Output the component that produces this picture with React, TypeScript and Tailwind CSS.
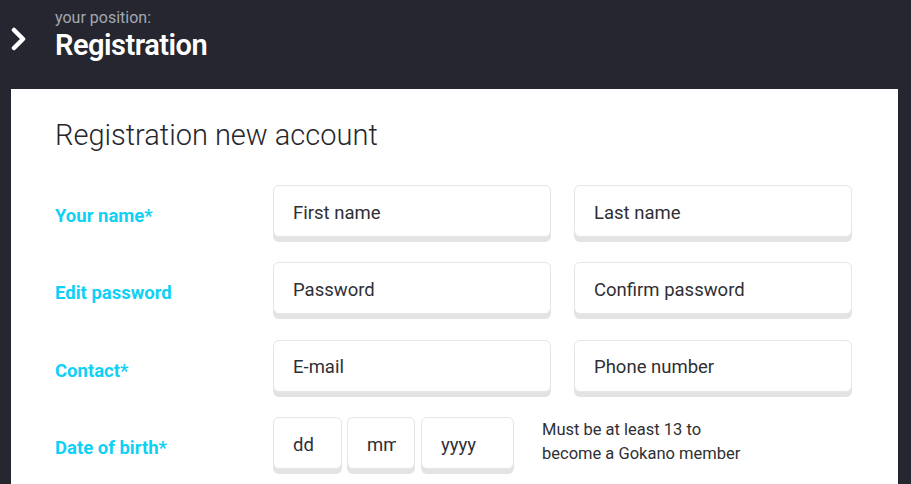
import React from "react";

const font = { fontFamily: "Roboto, 'Open Sans', sans-serif" };

function Box({ text, w, clip }: { text: string; w: string; clip?: string }) {
  return (
    <div
      className={`${w} h-[52px] shrink-0 rounded-[6px] border border-[#e6e6e6] bg-white shadow-[0_5px_0_#e3e3e3] flex items-center pl-[19px] pt-[5px]`}
    >
      <span className={`text-[18.5px] text-[#2f2f35] whitespace-nowrap overflow-hidden ${clip ?? ""}`}>{text}</span>
    </div>
  );
}

function Label({ text }: { text: string }) {
  return <div className="w-[218px] shrink-0 pt-[18px] text-[18.5px] font-bold text-[#0fd0f5]">{text}</div>;
}

function Row({ label, children }: { label: string; children: React.ReactNode }) {
  return (
    <div className="flex items-start h-[57px]">
      <Label text={label} />
      <div className="flex gap-[23px]">{children}</div>
    </div>
  );
}

export default function App() {
  return (
    <div className="w-[911px] h-[484px] bg-[#25262f] overflow-hidden" style={font}>
      <div className="h-[89px] flex">
        <div className="w-[55px] shrink-0 flex pt-[27px] pl-[10px]">
          <svg width="18" height="24" viewBox="0 0 18 24">
            <polyline points="4,3 13,12 4,21" fill="none" stroke="white" strokeWidth="4.5" strokeLinecap="round" strokeLinejoin="round" />
          </svg>
        </div>
        <div className="flex flex-col pt-[8px]">
          <div className="text-[16px] leading-[20px] text-[#a3a8b0]">your position:</div>
          <div className="text-[29px] leading-[34px] font-semibold text-white tracking-[-0.5px]">Registration</div>
        </div>
      </div>
      <div className="ml-[11px] w-[887px] h-[395px] bg-white pl-[44px] pt-[28px]">
        <div className="text-[29px] leading-[36px] text-[#26262c] font-light">Registration new account</div>
        <div className="mt-[32px] flex flex-col gap-[20.4px]">
          <Row label="Your name*">
            <Box text="First name" w="w-[278px]" />
            <Box text="Last name" w="w-[278px]" />
          </Row>
          <Row label="Edit password">
            <Box text="Password" w="w-[278px]" />
            <Box text="Confirm password" w="w-[278px]" />
          </Row>
          <Row label="Contact*">
            <Box text="E-mail" w="w-[278px]" />
            <Box text="Phone number" w="w-[278px]" />
          </Row>
          <div className="flex items-start h-[57px]">
            <Label text="Date of birth*" />
            <div className="flex">
              <Box text="dd" w="w-[69px]" />
              <div className="ml-[5px]">
                <Box text="mm" w="w-[68px]" clip="max-w-[29px]" />
              </div>
              <div className="ml-[6px]">
                <Box text="yyyy" w="w-[93px]" />
              </div>
            </div>
            <div className="ml-[28px] pt-[1px] text-[16.5px] leading-[24px] text-[#2f2f35]">
              Must be at least 13 to
              <br />
              become a Gokano member
            </div>
          </div>
        </div>
      </div>
    </div>
  );
}
